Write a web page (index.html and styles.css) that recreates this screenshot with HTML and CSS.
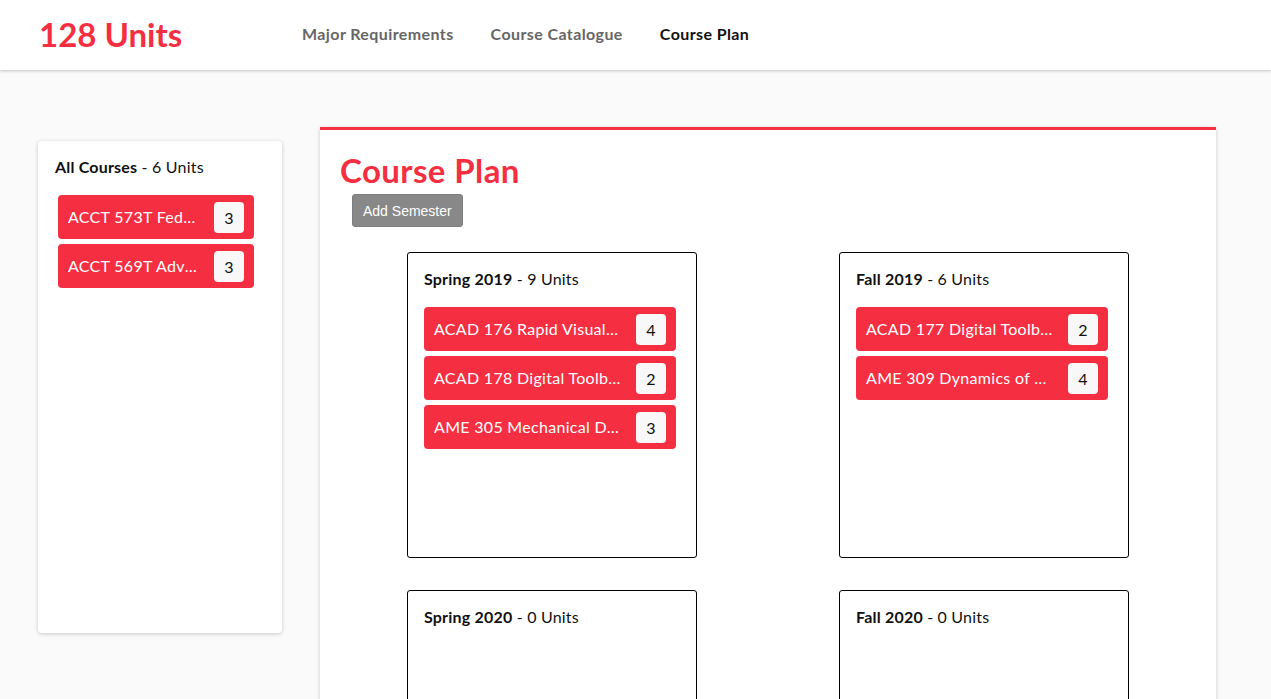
FILE: index.html
```html
<!DOCTYPE html>
<html>
<head>
<meta charset="utf-8">
<link rel="stylesheet" href="styles.css">
</head>
<body>
<header class="topbar">
  <div class="brand">128 Units</div>
  <nav class="nav">
    <a class="nav-link">Major Requirements</a>
    <a class="nav-link">Course Catalogue</a>
    <a class="nav-link active">Course Plan</a>
  </nav>
</header>
<div class="page">
  <aside class="sidebar">
    <div class="list-title"><b>All Courses</b> - 6 Units</div>
    <div class="items side-items">
      <div class="course"><span class="name">ACCT 573T Federal Tax</span><span class="badge">3</span></div>
      <div class="course"><span class="name">ACCT 569T Advanced Tax</span><span class="badge">3</span></div>
    </div>
  </aside>
  <main class="plan">
    <h1 class="plan-title">Course Plan</h1>
    <button class="add-btn">Add Semester</button>
    <div class="semesters">
      <div class="cell"><div class="semester">
        <div class="list-title"><b>Spring 2019</b> - 9 Units</div>
        <div class="items">
          <div class="course"><span class="name">ACAD 176 Rapid Visualization</span><span class="badge">4</span></div>
          <div class="course"><span class="name">ACAD 178 Digital Toolbox</span><span class="badge">2</span></div>
          <div class="course"><span class="name">AME 305 Mechanical Design</span><span class="badge">3</span></div>
        </div>
      </div></div>
      <div class="cell"><div class="semester">
        <div class="list-title"><b>Fall 2019</b> - 6 Units</div>
        <div class="items">
          <div class="course"><span class="name">ACAD 177 Digital Toolbox</span><span class="badge">2</span></div>
          <div class="course"><span class="name">AME 309 Dynamics of Fluids</span><span class="badge">4</span></div>
        </div>
      </div></div>
      <div class="cell"><div class="semester">
        <div class="list-title"><b>Spring 2020</b> - 0 Units</div>
        <div class="items"></div>
      </div></div>
      <div class="cell"><div class="semester">
        <div class="list-title"><b>Fall 2020</b> - 0 Units</div>
        <div class="items"></div>
      </div></div>
    </div>
  </main>
</div>
</body>
</html>
```
FILE: styles.css
```css
* { box-sizing: border-box; }
html, body { margin: 0; padding: 0; }
body {
  background: #fafafa;
  font-family: Lato, "Open Sans", sans-serif;
  color: #000;
  overflow: hidden;
  height: 699px;
}
.topbar {
  height: 70px;
  background: #fff;
  display: flex;
  align-items: center;
  box-shadow: 0 1px 3px rgba(0,0,0,0.22);
  position: relative;
  z-index: 2;
}
.brand {
  margin-left: 39px;
  width: 263px;
  font-size: 33px;
  font-weight: 700;
  color: #f52f41;
  letter-spacing: 0;
  padding-bottom: 3px;
}
.nav { display: flex; gap: 37px; padding-bottom: 3px; }
.nav-link {
  font-size: 16px;
  font-weight: 700;
  color: #666;
  letter-spacing: 0.4px;
  text-decoration: none;
}
.nav-link.active { color: #111; }
.page {
  display: flex;
  align-items: flex-start;
  padding: 57px 0 0 38px;
}
.sidebar {
  width: 244px;
  height: 492px;
  margin-top: 14px;
  background: #fff;
  border-radius: 4px;
  box-shadow: 0 1px 4px rgba(0,0,0,0.2);
  padding: 17px 28px 0 20px;
}
.sidebar .list-title { margin-left: -3px; }
.list-title {
  font-size: 16px;
  line-height: 18px;
  color: #111;
  letter-spacing: 0.2px;
}
.list-title b { font-weight: 700; }
.items {
  display: flex;
  flex-direction: column;
  gap: 5px;
  margin-top: 19px;
}
.course {
  height: 44px;
  background: #f52f41;
  border-radius: 4px;
  display: flex;
  align-items: center;
  justify-content: space-between;
  padding: 0 10px 1px 10px;
  color: #fff;
  font-size: 16px;
  letter-spacing: 0.3px;
}
.name {
  white-space: nowrap;
  overflow: hidden;
  text-overflow: ellipsis;
  flex: 1;
  min-width: 0;
  padding-right: 14px;
}
.badge {
  width: 30px;
  height: 31px;
  background: #f8f8f8;
  color: #111;
  border-radius: 4px;
  display: flex;
  align-items: center;
  justify-content: center;
  font-size: 16px;
  flex: none;
  margin-top: 1px;
}
.plan {
  margin-left: 38px;
  width: 896px;
  height: 600px;
  background: #fff;
  border-top: 3px solid #f52f41;
  box-shadow: 0 1px 4px rgba(0,0,0,0.2);
  padding: 20px 16px 0 16px;
}
.plan-title {
  margin: 0 0 0 4px;
  font-size: 33px;
  line-height: 40px;
  font-weight: 700;
  color: #f52f41;
  letter-spacing: 0.4px;
}
.add-btn {
  display: block;
  margin: 4px 0 0 16px;
  height: 33px;
  padding: 0 10px;
  background: #888;
  color: #fff;
  border: 1px solid #7d7d7d;
  border-radius: 3px;
  font-family: "Liberation Sans", Arial, sans-serif;
  font-size: 14px;
}
.semesters {
  display: grid;
  grid-template-columns: 1fr 1fr;
  row-gap: 32px;
  margin-top: 25px;
}
.cell { display: flex; justify-content: center; }
.semester {
  width: 290px;
  height: 306px;
  border: 1px solid #000;
  border-radius: 3px;
  padding: 17px 20px 0 16px;
  background: #fff;
}
```
